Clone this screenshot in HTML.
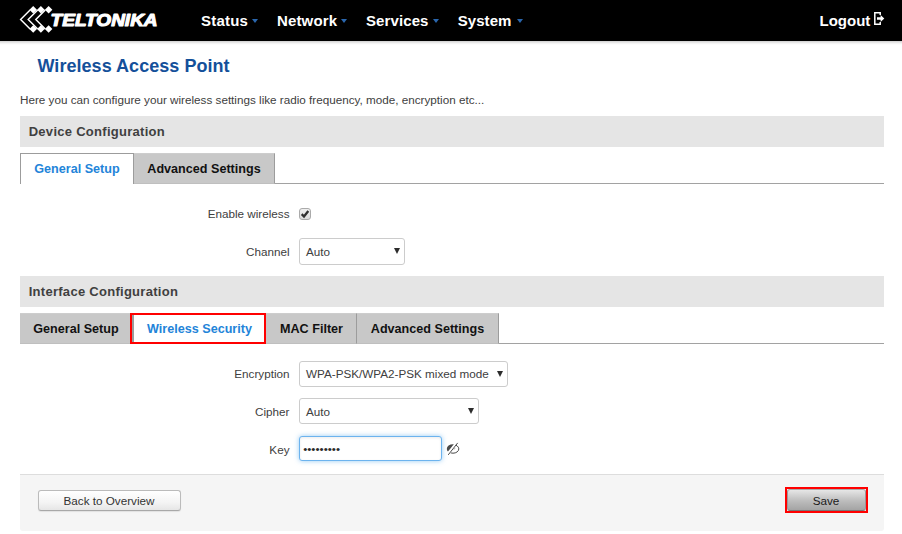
<!DOCTYPE html>
<html lang="en">
<head>
<meta charset="utf-8">
<title>Wireless Access Point</title>
<style>
*{box-sizing:border-box;margin:0;padding:0}
html,body{width:902px;height:534px;overflow:hidden;background:#fff}
body{font-family:"Liberation Sans",Arial,sans-serif;font-size:12px;color:#404040;position:relative}
.abs{position:absolute;white-space:nowrap}
#hdr{left:-10px;top:0;width:922px;height:41px;background:#000;box-shadow:0 1px 3px rgba(0,0,0,.25)}
.nav{color:#fff;font-weight:bold;font-size:15px;line-height:20px;top:11px;letter-spacing:.2px}
.caret{top:19px;width:0;height:0;border-left:3.8px solid transparent;border-right:3.8px solid transparent;border-top:4.2px solid #2a66ad}
#title{left:37.5px;top:55px;letter-spacing:.04px;font-size:18px;line-height:22px;font-weight:bold;color:#14509a}
#desc{left:20px;top:93px;font-size:11.7px;line-height:14px;color:#404040}
.sec{left:20px;width:864px;height:31px;background:#e5e5e5;font-size:13px;font-weight:bold;color:#404040;line-height:31px;padding-left:8.7px;letter-spacing:.28px}
.tabline{left:20px;width:864px;height:1px;background:#a2a2a2}
.tab{height:31px;border-right:1px solid #9c9c9c;border-top:1px solid #cdcdcd;border-bottom:1px solid #bfbfbf;background:#c8c8c8;color:#111;font-weight:bold;font-size:12.6px;line-height:31px;text-align:center}
.tab.on{background:#fff;color:#2384d9;border:1px solid #9c9c9c;border-bottom:none}
.lbl{width:269.5px;left:20px;text-align:right;font-size:11.7px;line-height:14px;color:#404040}
.sel{height:26px;border:1px solid #ccc;border-radius:3px;background:#fff;font-size:11.7px;line-height:26px;padding-left:6px;color:#404040}
.sel i{position:absolute;right:4.4px;top:8.6px;width:0;height:0;border-left:3.3px solid transparent;border-right:3.3px solid transparent;border-top:6.6px solid #2c2c2c}
.btn{height:21px;border:1px solid #bbb;border-bottom-color:#a8a8a8;border-radius:3px;font-size:11.7px;line-height:20px;padding-right:1px;text-align:center;color:#333;background:linear-gradient(#fff,#f4f4f4 60%,#e6e6e6);box-shadow:0 1px 1px rgba(0,0,0,.08)}
</style>
</head>
<body>
<div id="hdr" class="abs"></div>
<svg class="abs" style="left:18px;top:4px" width="36" height="30" viewBox="0 0 36 30">
 <g fill="none" stroke="#fff" stroke-width="1.45" stroke-linejoin="miter">
  <path d="M12.1 5.9 L2.6 15.4 L12.1 24.9"/>
  <path d="M19.7 5.9 L10.2 15.4 L19.7 24.9"/>
  <path d="M27.3 5.9 L17.8 15.4 L27.3 24.9"/>
 </g>
 <g fill="#fff">
  <path d="M15.2 2 L18.95 5.75 L15.2 9.5 L11.45 5.75Z"/>
  <path d="M22.9 2 L26.65 5.75 L22.9 9.5 L19.15 5.75Z"/>
  <path d="M30.6 2 L34.35 5.75 L30.6 9.5 L26.85 5.75Z"/>
  <path d="M15.2 21.2 L18.95 24.95 L15.2 28.7 L11.45 24.95Z"/>
  <path d="M22.9 21.2 L26.65 24.95 L22.9 28.7 L19.15 24.95Z"/>
  <path d="M30.6 21.2 L34.35 24.95 L30.6 28.7 L26.85 24.95Z"/>
 </g>
</svg>
<svg class="abs" id="brand" style="left:48px;top:8px" width="114" height="24" viewBox="0 0 114 24">
 <text x="2.6" y="17.65" font-family="Liberation Sans, Arial, sans-serif" font-size="16.6" font-weight="bold" font-style="italic" fill="#fff" stroke="#fff" stroke-width="1.1" stroke-linejoin="round" textLength="107" lengthAdjust="spacingAndGlyphs">TELTONIKA</text>
</svg>
<div class="abs nav" style="left:201px">Status</div>
<div class="abs nav" style="left:277px;letter-spacing:.14px">Network</div>
<div class="abs nav" style="left:366px;letter-spacing:.1px">Services</div>
<div class="abs nav" style="left:457.7px;letter-spacing:.08px">System</div>
<div class="abs nav" style="left:819.5px;letter-spacing:0">Logout</div>
<i class="abs caret" style="left:251.8px"></i><i class="abs caret" style="left:341px"></i><i class="abs caret" style="left:432.8px"></i><i class="abs caret" style="left:516.5px"></i>
<svg class="abs" style="left:873px;top:11px" width="13" height="15" viewBox="0 0 13 15">
 <path d="M7.2 4V1.8H1.8V13.2H7.2V11" fill="none" stroke="#fff" stroke-width="1.5"/>
 <path d="M4 6.2H7.6V4L11.3 7.5L7.6 11V8.8H4Z" fill="#fff"/>
</svg>

<div class="abs" id="title">Wireless Access Point</div>
<div class="abs" id="desc">Here you can configure your wireless settings like radio frequency, mode, encryption etc...</div>

<div class="abs sec" style="top:116px">Device Configuration</div>
<div class="abs tabline" style="top:183px"></div>
<div class="abs tab on" style="left:20px;top:153px;width:114px">General Setup</div>
<div class="abs tab" style="left:134px;top:153px;width:141px">Advanced Settings</div>

<div class="abs lbl" style="top:207px">Enable wireless</div>
<div class="abs" id="cb" style="left:299px;top:208px;width:12px;height:12px;border:1px solid #aaa;border-radius:3px;background:linear-gradient(#efefef,#dbdbdb)"><svg width="10" height="10" viewBox="0 0 10 10" style="display:block"><path d="M1.7 5.1L4 7.5L8.3 2" fill="none" stroke="#303030" stroke-width="2.3"/></svg></div>
<div class="abs lbl" style="top:245px">Channel</div>
<div class="abs sel" style="left:299px;top:238px;width:106px;height:27px">Auto<i></i></div>

<div class="abs sec" style="top:276px">Interface Configuration</div>
<div class="abs tabline" style="top:343px"></div>
<div class="abs tab" style="left:20px;top:313px;width:113px">General Setup</div>
<div class="abs tab on" style="left:133px;top:313px;width:133px">Wireless Security</div>
<div class="abs tab" style="left:266px;top:313px;width:91px;padding-left:1px">MAC Filter</div>
<div class="abs tab" style="left:357px;top:313px;width:142px">Advanced Settings</div>
<div class="abs" id="hl1" style="left:130px;top:313px;width:136px;height:31px;border:2px solid #f00"></div>

<div class="abs lbl" style="top:367px">Encryption</div>
<div class="abs sel" style="left:299px;top:361px;width:209px;line-height:24px">WPA-PSK/WPA2-PSK mixed mode<i></i></div>
<div class="abs lbl" style="top:405px">Cipher</div>
<div class="abs sel" style="left:299px;top:398px;width:180px">Auto<i></i></div>
<div class="abs lbl" style="top:443px">Key</div>
<div class="abs" id="key" style="left:299px;top:436px;width:143px;height:25px;border:1px solid #6cb3ee;border-radius:3px;background:#fff;box-shadow:inset 0 1px 3px rgba(0,0,0,.08),0 0 5px rgba(82,168,236,.6);font-size:11.7px;line-height:24px;padding-left:3.2px;color:#2a2a2a">•••••••••</div>
<svg class="abs" style="left:446px;top:442px" width="15" height="14" viewBox="0 0 15 14">
 <defs>
  <clipPath id="cl"><path d="M-1 -1H10.4L0.4 11.5H-1Z"/></clipPath>
  <clipPath id="cr"><path d="M16 -1H12.2L2.2 15H16Z"/></clipPath>
 </defs>
 <ellipse cx="7" cy="6.9" rx="6.2" ry="4.7" fill="#4a4a4a" clip-path="url(#cl)"/>
 <ellipse cx="7" cy="6.9" rx="5.8" ry="4.3" fill="none" stroke="#4a4a4a" stroke-width="1" clip-path="url(#cr)"/>
 <path d="M7.6 7.4a1.6 1.6 0 0 0 1.4 -1.6" fill="none" stroke="#999" stroke-width=".8" clip-path="url(#cr)"/>
 <path d="M2.2 12.9L11.7 0.9" stroke="#4a4a4a" stroke-width="1" fill="none"/>
</svg>

<div class="abs" id="foot" style="left:20px;top:474px;width:864px;height:57px;background:#f5f5f5;border-top:1px solid #ddd;border-radius:0 0 3px 3px"></div>
<div class="abs btn" style="left:38px;top:490px;width:143px">Back to Overview</div>
<div class="abs btn" id="save" style="left:787px;top:489px;width:79px;height:22px;line-height:21px;color:#1a1a1a;padding-right:1px;background:linear-gradient(#e6e6e6,#bcbcbc 55%,#a4a4a4);border-color:#aaa #999 #777">Save</div>
<div class="abs" id="hl2" style="left:785px;top:487px;width:83px;height:26px;border:2px solid #f00"></div>
</body>
</html>
